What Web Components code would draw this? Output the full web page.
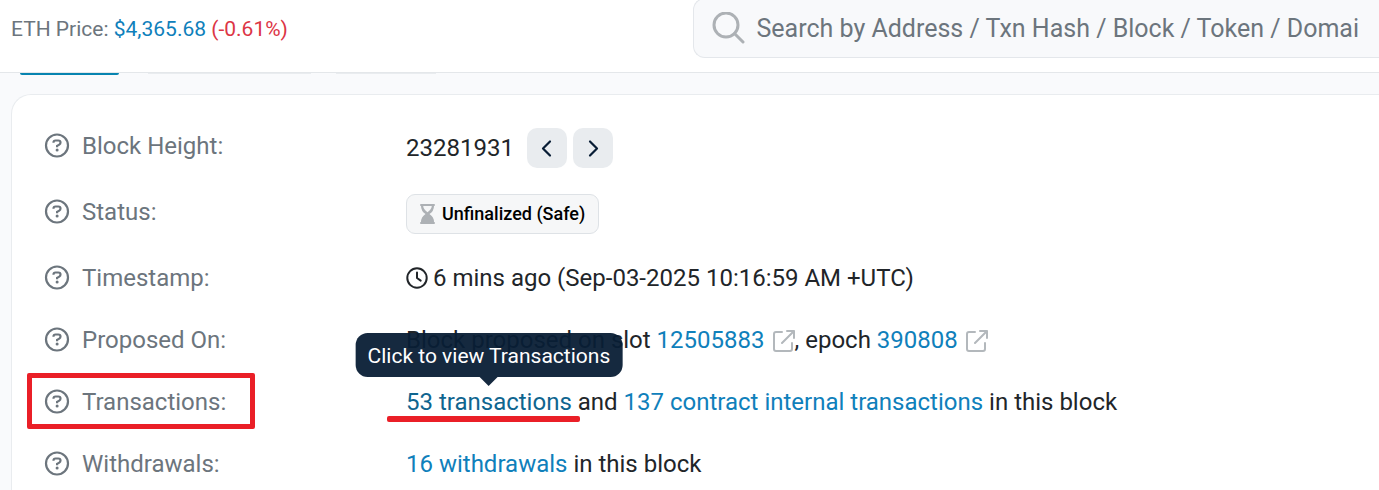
<!DOCTYPE html>
<html lang="en">
<head>
<meta charset="utf-8">
<title>Block 23281931</title>
<style>
body { margin: 0; font: 24px/36px Roboto, "Liberation Sans", sans-serif; color: #212529; background: #f9fafc; }
</style>
</head>
<body>
<block-page></block-page>
<script>
const define = (name, html) => {
  const t = document.createElement('template');
  t.innerHTML = html;
  customElements.define(name, class extends HTMLElement {
    constructor() {
      super();
      this.attachShadow({ mode: 'open' }).append(t.content.cloneNode(true));
    }
  });
};

define('help-icon', `
<style>:host{display:block;flex:none;width:26px;height:26px}svg{display:block}</style>
<svg width="26" height="26" viewBox="0 0 26 26" fill="none" stroke="currentColor" stroke-width="2.2" aria-hidden="true">
<circle cx="13" cy="12.500" r="11"/><path d="M9.500 9.800V9.500q0-2 2-2h2.800q2.200 0 2.200 2.100 0 1.300-1.200 2L13.100 12.900v1.400"/><circle cx="13.100" cy="17" r="1.500" fill="currentColor" stroke="none"/></svg>`);

define('external-icon', `
<style>:host{display:inline-block;width:22px;height:22px;vertical-align:-4px;margin-left:8px}svg{display:block}</style>
<svg width="22" height="22" viewBox="0 0 22 22" fill="none" stroke="#b3b8bc" stroke-width="2" stroke-linecap="round" stroke-linejoin="round" aria-hidden="true">
<path d="M9 2H3q-2 0-2 2v15q0 2 2 2h14q2 0 2-2v-6M14 1h7v7M21 1L9 13"/></svg>`);

define('block-link', `
<style>:host{display:inline}a{color:var(--link,#0f80bb);text-decoration:none}</style>
<a href="#"><slot></slot></a>`);

define('info-row', `
<style>
:host{display:grid;grid-template-columns:362px 1fr;align-items:start;min-height:36px}
.label{display:flex;align-items:center;gap:12px;color:#6c757d;position:relative;width:max-content}
:host([marked]) .label::after{content:"";position:absolute;inset:-11px -29px -9px -17px;border:5px solid #ea1f27;border-radius:2px}
</style>
<div class="label"><help-icon></help-icon><slot name="label"></slot></div>
<div><slot></slot></div>`);

define('block-height', `
<style>
:host{display:flex;align-items:center;gap:6px}
span{margin-right:7px}
button{width:40px;height:40px;padding:0;border:0;border-radius:10px;background:#e9ecef;color:#081d35;display:grid;place-items:center}
svg{display:block}
</style>
<span><slot></slot></span>
<button aria-label="Previous block"><svg width="20" height="20" viewBox="0 0 20 20" fill="none" stroke="currentColor" stroke-width="2.200" stroke-linecap="round" stroke-linejoin="round"><path d="M13 3.500L6 10.500l7 7"/></svg></button>
<button aria-label="Next block"><svg width="20" height="20" viewBox="0 0 20 20" fill="none" stroke="currentColor" stroke-width="2.200" stroke-linecap="round" stroke-linejoin="round"><path d="M7 3.500l7 7-7 7"/></svg></button>`);

define('status-badge', `
<style>
:host{display:flex;align-items:center;gap:7px;width:max-content;box-sizing:border-box;height:40px;padding:0 13px;border:1px solid #dee2e6;border-radius:9px;background:#f6f7f8;color:#000;font-size:18px;font-weight:500;line-height:24px}
</style>
<svg width="15" height="20" viewBox="0 0 15 20" aria-hidden="true"><path fill="#adb1b5" fill-rule="evenodd" d="M1 0h13q1 0 1 1T14 2q0 5-4.500 8 4.500 3 4.500 8 1 0 1 1T14 20H1q-1 0-1-1t1-1q0-5 4.500-8Q1 7 1 2 0 2 0 1T1 0zM3.200 2q.3 3.500 4.300 6.200Q11.500 5.500 11.800 2z"/></svg>
<slot></slot>`);

define('time-stamp', `
<style>:host{display:flex;align-items:center;gap:5px}</style>
<svg width="22" height="22" viewBox="0 0 22 22" fill="none" stroke="currentColor" stroke-width="2" stroke-linecap="round" stroke-linejoin="round" aria-hidden="true"><circle cx="11" cy="11" r="9.700"/><path d="M11 5.500V11l3.700 2.600"/></svg>
<slot></slot>`);

define('tip-link', `
<style>
:host{display:inline-block;position:relative;--link:#0f658f}
:host::after{content:"";position:absolute;left:-19px;right:-8px;top:32px;height:6px;border-radius:2px;background:#ea1f27}
.tip{position:absolute;left:50%;bottom:43px;transform:translateX(-50%);padding:9px 12px 7px;border-radius:12px;background:rgba(8,29,53,.95);color:#fff;font-size:21px;line-height:28px;white-space:nowrap}
.tip::after{content:"";position:absolute;top:100%;left:50%;margin-left:-9px;border:9px solid transparent;border-bottom:0;border-top-color:#15293f}
</style>
<block-link><slot></slot></block-link><div class="tip" role="tooltip"><slot name="tip"></slot></div>`);

define('price-line', `
<style>:host{display:block;font-size:21px;line-height:28px;color:#6c757d}.down{color:#dc3545}</style>
<slot></slot> <block-link><slot name="price"></slot></block-link> <span class="down"><slot name="change"></slot></span>`);

define('search-box', `
<style>
:host{display:flex;align-items:center;gap:12px;box-sizing:border-box;height:60px;padding-left:18px;border:1px solid #e4e7eb;border-right:0;border-radius:12px 0 0 12px;background:#f8f9fb}
svg{flex:none}
input{flex:1;min-width:0;height:36px;padding:2px 0 0;border:0;outline:0;background:none;font:inherit;font-size:25px;color:#212529}
input::placeholder{color:#6c757d;opacity:1}
</style>
<svg width="33" height="33" viewBox="0 0 33 33" fill="none" stroke="#adb1b5" stroke-width="3" stroke-linecap="round" aria-hidden="true"><circle cx="14" cy="13" r="12"/><path d="M22.500 21.500l8.500 8.500"/></svg>
<input type="search" aria-label="Search" placeholder="Search by Address / Txn Hash / Block / Token / Domai">`);

define('top-bar', `
<style>
:host{display:grid;grid-template-columns:1fr 1fr;align-items:start;box-sizing:border-box;height:73px;background:#fff;border-bottom:1px solid #e4e7ea}
price-line{margin:15px 0 0 11px}
search-box{margin:-2px 0 0 3px}
</style>
<price-line>ETH Price:<span slot="price">$4,365.68</span><span slot="change">(-0.61%)</span></price-line>
<search-box></search-box>`);

define('tab-edges', `
<style>
:host{display:flex;height:21px;padding-left:20px}
i{height:1px;background:#e9ecef}
i:nth-of-type(1){width:99px;height:2px;border-radius:0 0 2px 2px;background:#0784b0;margin-right:29px}
i:nth-of-type(2){width:163px;margin-right:25px}
i:nth-of-type(3){width:100px}
</style>
<i></i><i></i><i></i>`);

define('block-card', `
<style>
:host{display:flex;flex-direction:column;gap:26px;margin-left:11px;padding:33px 24px 0 32px;border:1px solid #e9ecef;border-width:1px 0 0 1px;border-radius:20px 0 0 0;background:#fff}
</style>
<slot></slot>`);

define('block-page', `
<style>:host{display:flex;flex-direction:column;min-height:100vh}block-card{flex:1}</style>
<top-bar></top-bar>
<tab-edges></tab-edges>
<block-card>
<info-row><span slot="label">Block Height:</span><block-height>23281931</block-height></info-row>
<info-row><span slot="label">Status:</span><status-badge>Unfinalized (Safe)</status-badge></info-row>
<info-row><span slot="label">Timestamp:</span><time-stamp>6 mins ago (Sep-03-2025 10:16:59 AM +UTC)</time-stamp></info-row>
<info-row><span slot="label">Proposed On:</span>Block proposed on slot <block-link>12505883</block-link><external-icon></external-icon>, epoch <block-link>390808</block-link><external-icon></external-icon></info-row>
<info-row marked><span slot="label">Transactions:</span><tip-link>53 transactions<span slot="tip">Click to view Transactions</span></tip-link> and <block-link>137 contract internal transactions</block-link> in this block</info-row>
<info-row><span slot="label">Withdrawals:</span><block-link>16 withdrawals</block-link> in this block</info-row>
</block-card>`);
</script>
</body>
</html>
